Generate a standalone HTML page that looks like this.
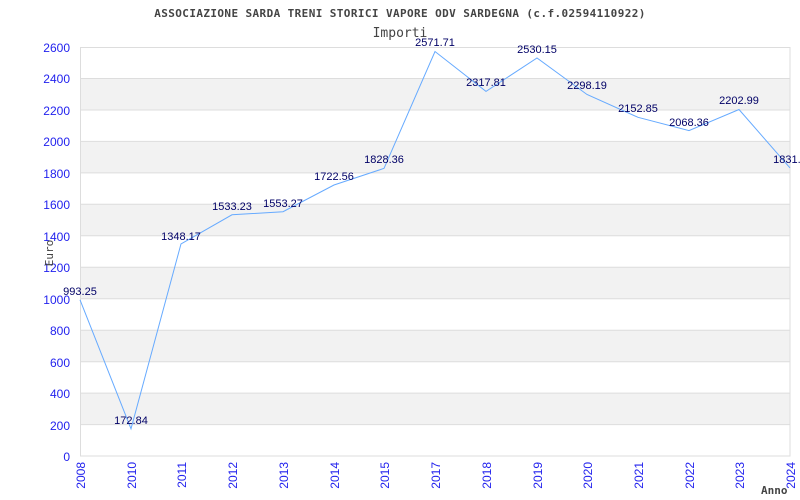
<!DOCTYPE html>
<html><head><meta charset="utf-8"><style>
html,body{margin:0;padding:0;background:#fff;width:800px;height:500px;overflow:hidden}
</style></head><body>
<svg width="800" height="500" xmlns="http://www.w3.org/2000/svg" font-family="Liberation Sans, sans-serif">
<rect width="800" height="500" fill="#fff"/>
<text x="400" y="17" text-anchor="middle" font-family="DejaVu Sans Mono, monospace" font-weight="bold" font-size="11" letter-spacing="0.4" fill="#444">ASSOCIAZIONE SARDA TRENI STORICI VAPORE ODV SARDEGNA (c.f.02594110922)</text>
<text x="400" y="37" text-anchor="middle" font-family="DejaVu Sans Mono, monospace" font-size="13" fill="#444">Importi</text>
<g fill="#f2f2f2">
<rect x="80" y="78.5" width="710" height="31.5"/>
<rect x="80" y="141.4" width="710" height="31.5"/>
<rect x="80" y="204.3" width="710" height="31.5"/>
<rect x="80" y="267.3" width="710" height="31.5"/>
<rect x="80" y="330.2" width="710" height="31.5"/>
<rect x="80" y="393.1" width="710" height="31.5"/>
</g>
<g stroke="#ddd" stroke-width="1">
<line x1="80" x2="790" y1="78.5" y2="78.5"/><line x1="80" x2="790" y1="110" y2="110"/>
<line x1="80" x2="790" y1="141.4" y2="141.4"/><line x1="80" x2="790" y1="172.9" y2="172.9"/>
<line x1="80" x2="790" y1="204.3" y2="204.3"/><line x1="80" x2="790" y1="235.8" y2="235.8"/>
<line x1="80" x2="790" y1="267.3" y2="267.3"/><line x1="80" x2="790" y1="298.8" y2="298.8"/>
<line x1="80" x2="790" y1="330.2" y2="330.2"/><line x1="80" x2="790" y1="361.7" y2="361.7"/>
<line x1="80" x2="790" y1="393.1" y2="393.1"/><line x1="80" x2="790" y1="424.6" y2="424.6"/>
</g>
<rect x="80.5" y="47.5" width="709.5" height="408.5" fill="none" stroke="#ddd"/>
<g font-size="12" fill="#22e" text-anchor="end">
<text x="70" y="52">2600</text><text x="70" y="83">2400</text><text x="70" y="115">2200</text>
<text x="70" y="146">2000</text><text x="70" y="178">1800</text><text x="70" y="209">1600</text>
<text x="70" y="241">1400</text><text x="70" y="272">1200</text><text x="70" y="304">1000</text>
<text x="70" y="335">800</text><text x="70" y="367">600</text><text x="70" y="398">400</text>
<text x="70" y="430">200</text><text x="70" y="461">0</text>
</g>
<text transform="translate(53,253) rotate(-90)" text-anchor="middle" font-family="DejaVu Sans Mono, monospace" font-size="11" fill="#444">Euro</text>
<g font-size="12" fill="#22e" text-anchor="end">
<text transform="translate(85,462) rotate(-90)">2008</text>
<text transform="translate(136,462) rotate(-90)">2010</text>
<text transform="translate(186,462) rotate(-90)">2011</text>
<text transform="translate(237,462) rotate(-90)">2012</text>
<text transform="translate(288,462) rotate(-90)">2013</text>
<text transform="translate(339,462) rotate(-90)">2014</text>
<text transform="translate(389,462) rotate(-90)">2015</text>
<text transform="translate(440,462) rotate(-90)">2017</text>
<text transform="translate(491,462) rotate(-90)">2018</text>
<text transform="translate(542,462) rotate(-90)">2019</text>
<text transform="translate(592,462) rotate(-90)">2020</text>
<text transform="translate(643,462) rotate(-90)">2021</text>
<text transform="translate(694,462) rotate(-90)">2022</text>
<text transform="translate(744,462) rotate(-90)">2023</text>
<text transform="translate(795,462) rotate(-90)">2024</text>
</g>
<text x="761" y="494" font-family="DejaVu Sans Mono, monospace" font-weight="bold" font-size="11" fill="#444">Anno</text>
<polyline fill="none" stroke="#6af" stroke-width="1" points="80,299.8 131,428.8 181,243.9 232,214.8 283,211.7 334,185.0 384,168.4 435,51.5 486,91.4 537,58.0 587,94.5 638,117.3 689,130.6 739,109.5 790,167.9"/>
<g font-size="11" fill="#006" text-anchor="middle">
<text x="80" y="295">993.25</text>
<text x="131" y="424">172.84</text>
<text x="181" y="240">1348.17</text>
<text x="232" y="210">1533.23</text>
<text x="283" y="207">1553.27</text>
<text x="334" y="180">1722.56</text>
<text x="384" y="163">1828.36</text>
<text x="435" y="46">2571.71</text>
<text x="486" y="86">2317.81</text>
<text x="537" y="53">2530.15</text>
<text x="587" y="89">2298.19</text>
<text x="638" y="112">2152.85</text>
<text x="689" y="126">2068.36</text>
<text x="739" y="104">2202.99</text>
<text x="790" y="163">1831.8</text>
</g>
</svg>
</body></html>
